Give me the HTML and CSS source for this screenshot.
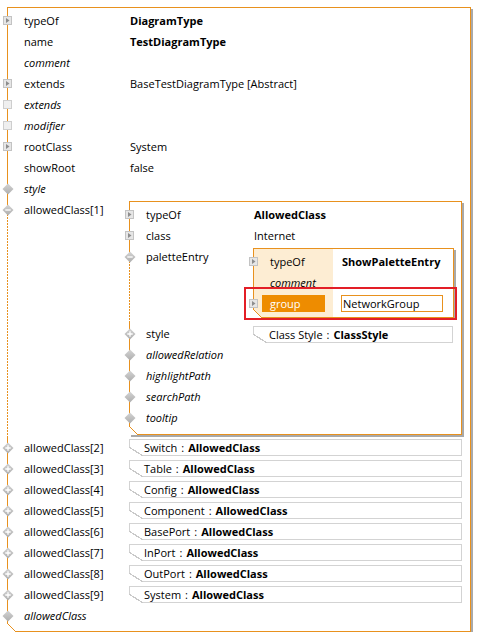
FILE: index.html
```html
<!DOCTYPE html>
<html lang="en">
<head>
  <meta charset="UTF-8">
  <title>DiagramType editor</title>
  <link rel="stylesheet" href="styles.css">
</head>
<body>

<svg class="defs" width="0" height="0" aria-hidden="true">
  <defs>
    <linearGradient id="gray" x1="0" y1="0" x2="0" y2="1">
      <stop offset="0" stop-color="#d4d4d4"/>
      <stop offset="1" stop-color="#adadad"/>
    </linearGradient>
    <symbol id="exp" viewBox="0 0 9 9">
      <rect x=".5" y=".5" width="8" height="8" fill="#e6e6e6" stroke="#c3c3c3"/>
      <path d="M3 2l3.5 2.5L3 7z" fill="#8d8d8d"/>
    </symbol>
    <symbol id="sq" viewBox="0 0 9 9">
      <rect x=".5" y=".5" width="8" height="8" fill="#efefef" stroke="#cecece"/>
    </symbol>
    <symbol id="dia" viewBox="0 0 12 12">
      <path d="M6 .5L11.5 6 6 11.5 .5 6z" fill="url(#gray)"/>
    </symbol>
    <symbol id="dmin" viewBox="0 0 12 12">
      <path d="M6 .5L11.5 6 6 11.5 .5 6z" fill="url(#gray)"/>
      <path d="M3.3 6h5.4" stroke="#fff" stroke-width="1.3"/>
    </symbol>
    <symbol id="dplus" viewBox="0 0 12 12">
      <path d="M6 .5L11.5 6 6 11.5 .5 6z" fill="url(#gray)"/>
      <path d="M3.3 6h5.4M6 3.3v5.4" stroke="#fff" stroke-width="1.3"/>
    </symbol>
  </defs>
</svg>

<div class="page">
<div class="frame outer">
  <div class="row"><span class="ico"><svg class="i9"><use href="#exp"/></svg></span><span class="lbl">typeOf</span><span class="val b">DiagramType</span></div>
  <div class="row"><span class="ico"></span><span class="lbl">name</span><span class="val b">TestDiagramType</span></div>
  <div class="row"><span class="ico"></span><span class="lbl it">comment</span></div>
  <div class="row"><span class="ico"><svg class="i9"><use href="#exp"/></svg></span><span class="lbl">extends</span><span class="val">BaseTestDiagramType [Abstract]</span></div>
  <div class="row"><span class="ico"><svg class="i9"><use href="#sq"/></svg></span><span class="lbl it">extends</span></div>
  <div class="row"><span class="ico"><svg class="i9"><use href="#sq"/></svg></span><span class="lbl it">modifier</span></div>
  <div class="row"><span class="ico"><svg class="i9"><use href="#exp"/></svg></span><span class="lbl">rootClass</span><span class="val">System</span></div>
  <div class="row"><span class="ico"></span><span class="lbl">showRoot</span><span class="val">false</span></div>
  <div class="row"><span class="ico"><svg class="i12"><use href="#dia"/></svg></span><span class="lbl it">style</span></div>

  <div class="row open ac-row">
    <span class="ico"><svg class="i12"><use href="#dmin"/></svg></span><span class="lbl">allowedClass[1]</span>
    <div class="val box">
      <div class="frame nested">
        <div class="row"><span class="ico"><svg class="i9"><use href="#exp"/></svg></span><span class="lbl">typeOf</span><span class="val b">AllowedClass</span></div>
        <div class="row"><span class="ico"><svg class="i9"><use href="#exp"/></svg></span><span class="lbl">class</span><span class="val">Internet</span></div>
        <div class="row open pe-row">
          <span class="ico"><svg class="i12"><use href="#dmin"/></svg></span><span class="lbl">paletteEntry</span>
          <div class="val box">
            <div class="frame pe">
              <div class="row"><span class="ico"><svg class="i9"><use href="#exp"/></svg></span><span class="lbl"><span class="lt">typeOf</span></span><span class="val b">ShowPaletteEntry</span></div>
              <div class="row"><span class="ico"></span><span class="lbl it"><span class="lt">comment</span></span></div>
              <div class="row"><span class="ico"><svg class="i9"><use href="#exp"/></svg></span><span class="lbl"><span class="lt sel">group</span></span><span class="val"><span class="field">NetworkGroup</span></span></div>
              <div class="mark"></div>
            </div>
          </div>
        </div>
        <div class="row"><span class="ico"><svg class="i12"><use href="#dplus"/></svg></span><span class="lbl">style</span><div class="val box"><div class="stub small">Class Style<span class="sep">:</span><b>ClassStyle</b></div></div></div>
        <div class="row"><span class="ico"><svg class="i12"><use href="#dia"/></svg></span><span class="lbl it">allowedRelation</span></div>
        <div class="row"><span class="ico"><svg class="i12"><use href="#dia"/></svg></span><span class="lbl it">highlightPath</span></div>
        <div class="row"><span class="ico"><svg class="i12"><use href="#dia"/></svg></span><span class="lbl it">searchPath</span></div>
        <div class="row"><span class="ico"><svg class="i12"><use href="#dia"/></svg></span><span class="lbl it">tooltip</span></div>
      </div>
    </div>
  </div>

  <div class="row"><span class="ico"><svg class="i12"><use href="#dplus"/></svg></span><span class="lbl">allowedClass[2]</span><div class="val box"><div class="stub">Switch<span class="sep">:</span><b>AllowedClass</b></div></div></div>
  <div class="row"><span class="ico"><svg class="i12"><use href="#dplus"/></svg></span><span class="lbl">allowedClass[3]</span><div class="val box"><div class="stub">Table<span class="sep">:</span><b>AllowedClass</b></div></div></div>
  <div class="row"><span class="ico"><svg class="i12"><use href="#dplus"/></svg></span><span class="lbl">allowedClass[4]</span><div class="val box"><div class="stub">Config<span class="sep">:</span><b>AllowedClass</b></div></div></div>
  <div class="row"><span class="ico"><svg class="i12"><use href="#dplus"/></svg></span><span class="lbl">allowedClass[5]</span><div class="val box"><div class="stub">Component<span class="sep">:</span><b>AllowedClass</b></div></div></div>
  <div class="row"><span class="ico"><svg class="i12"><use href="#dplus"/></svg></span><span class="lbl">allowedClass[6]</span><div class="val box"><div class="stub">BasePort<span class="sep">:</span><b>AllowedClass</b></div></div></div>
  <div class="row"><span class="ico"><svg class="i12"><use href="#dplus"/></svg></span><span class="lbl">allowedClass[7]</span><div class="val box"><div class="stub">InPort<span class="sep">:</span><b>AllowedClass</b></div></div></div>
  <div class="row"><span class="ico"><svg class="i12"><use href="#dplus"/></svg></span><span class="lbl">allowedClass[8]</span><div class="val box"><div class="stub">OutPort<span class="sep">:</span><b>AllowedClass</b></div></div></div>
  <div class="row"><span class="ico"><svg class="i12"><use href="#dplus"/></svg></span><span class="lbl">allowedClass[9]</span><div class="val box"><div class="stub">System<span class="sep">:</span><b>AllowedClass</b></div></div></div>
  <div class="row"><span class="ico"><svg class="i12"><use href="#dia"/></svg></span><span class="lbl it">allowedClass</span></div>
</div>
</div>

</body>
</html>
```

FILE: styles.css
```css
html,
body {
  margin: 0;
  padding: 0;
}

body {
  font-family: "Open Sans", "Noto Sans", sans-serif;
  font-size: 11px;
  color: #000;
  background: #fff;
}

.page {
  padding: 7px 0 0 7px;
}

.defs {
  position: absolute;
  width: 0;
  height: 0;
}

.frame {
  box-sizing: border-box;
  position: relative;
  border: 1px solid #e8911e;
  box-shadow: 2px 2px 0 #a9a9a9;
  background: #fff;
}

/* cut bottom-left corner */
.frame::after {
  content: "";
  position: absolute;
  left: -1px;
  bottom: -1px;
  width: 9px;
  height: 9px;
  background: linear-gradient(to top right, #fff calc(50% - 0.7px), #e8911e calc(50% - 0.7px), #e8911e calc(50% + 0.7px), transparent calc(50% + 0.7px));
}

.outer {
  width: 464px;
  padding: 2px 0 5px;
}

.nested {
  width: 333px;
  margin-top: 2px;
  padding: 2px 0 6px;
}

.row {
  display: flex;
  align-items: flex-start;
  position: relative;
  line-height: 21px;
  min-height: 21px;
}

/* dotted line below an opened node */
.row.open::before {
  content: "";
  position: absolute;
  left: -1px;
  top: 17px;
  bottom: 0;
  width: 1px;
  background: repeating-linear-gradient(#fff 0 1px, #e8911e 1px 3px);
}

.ac-row {
  padding-bottom: 2px;
}

.pe-row {
  padding-bottom: 5px;
}

.ico {
  flex: none;
  width: 12px;
  height: 21px;
  margin: 0 -5.5px 0 -6.5px;
  display: flex;
  align-items: center;
  justify-content: center;
  position: relative;
  z-index: 1;
}

.i9 {
  flex: none;
  width: 9px;
  height: 9px;
}

.i12 {
  flex: none;
  width: 12px;
  height: 12px;
}

.lbl {
  flex: none;
  box-sizing: border-box;
  width: 121px;
  padding-left: 16px;
  white-space: nowrap;
}

.nested .lbl {
  width: 123px;
}

.val {
  flex: 1;
  min-width: 0;
  padding-left: 1px;
  white-space: nowrap;
}

.val.box {
  padding-left: 0;
}

.b {
  font-weight: bold;
}

.it {
  font-style: italic;
}

/* collapsed child */
.stub {
  box-sizing: border-box;
  position: relative;
  width: 333px;
  height: 17px;
  margin-top: 2px;
  padding-left: 14px;
  border: 1px solid #d3d3d3;
  line-height: 15px;
  white-space: nowrap;
}

.stub.small {
  width: 200px;
  margin-top: 3px;
  padding-left: 15px;
}

.stub::after {
  content: "";
  position: absolute;
  left: -1px;
  bottom: -1px;
  width: 14px;
  height: 9px;
  background: linear-gradient(to top right, #fff calc(50% - 0.6px), #c9c9c9 calc(50% - 0.6px), #c9c9c9 calc(50% + 0.6px), transparent calc(50% + 0.6px));
}

.sep {
  margin: 0 4px;
}

/* palette entry box */
.pe {
  width: 201px;
  margin-top: 2px;
  padding: 2px 0 3px;
  background: linear-gradient(to right, #fdedd3 79px, #fff 79px);
}

.pe .lbl {
  width: 79px;
  padding-left: 8px;
}

.lt {
  display: block;
  padding-left: 8px;
}

.lt.sel {
  width: 63px;
  height: 17px;
  margin-top: 2px;
  box-sizing: border-box;
  line-height: 17px;
  background: #ee8c00;
  color: #fff;
}

.pe .val {
  padding-left: 9px;
}

.field {
  display: block;
  box-sizing: border-box;
  width: 102px;
  height: 17px;
  margin: 2px 0 0 -1px;
  padding-left: 1px;
  border: 1px solid #e8911e;
  line-height: 15px;
}

.mark {
  position: absolute;
  left: -10px;
  top: 38px;
  width: 213px;
  height: 33px;
  box-sizing: border-box;
  border: 2px solid #e31e26;
  z-index: 2;
}
```
